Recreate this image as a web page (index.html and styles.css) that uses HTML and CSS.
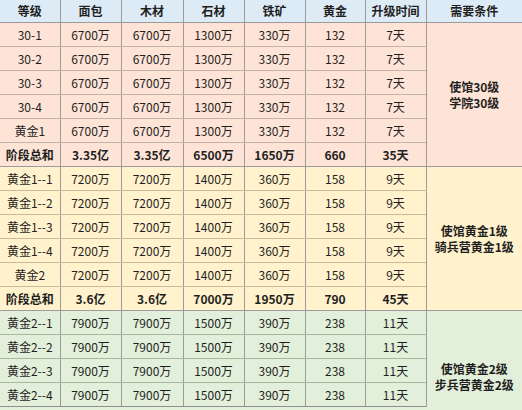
FILE: index.html
```html
<!DOCTYPE html>
<html lang="zh">
<head>
<meta charset="utf-8">
<link rel="stylesheet" href="styles.css">
</head>
<body>
<table class="sheet">
  <colgroup>
    <col class="c1"><col class="c2"><col class="c3"><col class="c4"><col class="c5"><col class="c6"><col class="c7"><col class="c8">
  </colgroup>
  <thead>
    <tr class="head"><th>等级</th><th>面包</th><th>木材</th><th>石材</th><th>铁矿</th><th>黄金</th><th>升级时间</th><th>需要条件</th></tr>
  </thead>
  <tbody class="s1">
    <tr><td>30-1</td><td>6700万</td><td>6700万</td><td>1300万</td><td>330万</td><td>132</td><td>7天</td><td class="cond" rowspan="6">使馆30级<br>学院30级</td></tr>
    <tr><td>30-2</td><td>6700万</td><td>6700万</td><td>1300万</td><td>330万</td><td>132</td><td>7天</td></tr>
    <tr><td>30-3</td><td>6700万</td><td>6700万</td><td>1300万</td><td>330万</td><td>132</td><td>7天</td></tr>
    <tr><td>30-4</td><td>6700万</td><td>6700万</td><td>1300万</td><td>330万</td><td>132</td><td>7天</td></tr>
    <tr><td>黄金1</td><td>6700万</td><td>6700万</td><td>1300万</td><td>330万</td><td>132</td><td>7天</td></tr>
    <tr class="total"><td>阶段总和</td><td>3.35亿</td><td>3.35亿</td><td>6500万</td><td>1650万</td><td>660</td><td>35天</td></tr>
  </tbody>
  <tbody class="s2">
    <tr><td>黄金1--1</td><td>7200万</td><td>7200万</td><td>1400万</td><td>360万</td><td>158</td><td>9天</td><td class="cond" rowspan="6">使馆黄金1级<br>骑兵营黄金1级</td></tr>
    <tr><td>黄金1--2</td><td>7200万</td><td>7200万</td><td>1400万</td><td>360万</td><td>158</td><td>9天</td></tr>
    <tr><td>黄金1--3</td><td>7200万</td><td>7200万</td><td>1400万</td><td>360万</td><td>158</td><td>9天</td></tr>
    <tr><td>黄金1--4</td><td>7200万</td><td>7200万</td><td>1400万</td><td>360万</td><td>158</td><td>9天</td></tr>
    <tr><td>黄金2</td><td>7200万</td><td>7200万</td><td>1400万</td><td>360万</td><td>158</td><td>9天</td></tr>
    <tr class="total"><td>阶段总和</td><td>3.6亿</td><td>3.6亿</td><td>7000万</td><td>1950万</td><td>790</td><td>45天</td></tr>
  </tbody>
  <tbody class="s3">
    <tr><td>黄金2--1</td><td>7900万</td><td>7900万</td><td>1500万</td><td>390万</td><td>238</td><td>11天</td><td class="cond cond-open" rowspan="4">使馆黄金2级<br>步兵营黄金2级</td></tr>
    <tr><td>黄金2--2</td><td>7900万</td><td>7900万</td><td>1500万</td><td>390万</td><td>238</td><td>11天</td></tr>
    <tr><td>黄金2--3</td><td>7900万</td><td>7900万</td><td>1500万</td><td>390万</td><td>238</td><td>11天</td></tr>
    <tr><td>黄金2--4</td><td>7900万</td><td>7900万</td><td>1500万</td><td>390万</td><td>238</td><td>11天</td></tr>
  </tbody>
</table>
</body>
</html>
```
FILE: styles.css
```css
html, body {
  margin: 0;
  padding: 0;
  overflow: hidden;
  background: #e2efda;
}
.sheet {
  border-collapse: collapse;
  table-layout: fixed;
  width: 522px;
  font-family: "Microsoft YaHei", "Noto Sans CJK SC", "Noto Sans", sans-serif;
  font-size: 12px;
  color: #1f1f1f;
}
.c1 { width: 60px; }
.c2 { width: 61px; }
.c3 { width: 62px; }
.c4 { width: 61px; }
.c5 { width: 61px; }
.c6 { width: 60px; }
.c7 { width: 61px; }
.c8 { width: 96px; }
.sheet th, .sheet td {
  padding: 0;
  text-align: center;
  vertical-align: middle;
  border-left: 1px solid #9b9b9b;
  border-right: 1px solid #9b9b9b;
  border-top: 1px solid #c3b4a8;
  border-bottom: 1px solid #c3b4a8;
  height: 23px;
  line-height: 16px;
  white-space: nowrap;
}
.sheet tr > :first-child { border-left: none; }
.sheet tr > :last-child { border-right: none; }
.head th {
  background: #ddebf7;
  font-weight: bold;
  height: 22px;
  border-top: none;
  border-bottom: 1px solid #9b9b9b;
}
.s1 td { background: #fde4d6; }
.s2 td { background: #fff2cc; border-top-color: #c9bb9a; border-bottom-color: #c9bb9a; }
.s3 td { background: #e2efda; border-top-color: #a9b7a0; border-bottom-color: #a9b7a0; }
.s3 tr:last-child td { border-bottom: 1px solid #8f8f8f; }
.total td { font-weight: bold; }
.s1 .total td, .s2 .total td { border-bottom: 1px solid #9b9b9b; }
.sheet td.cond {
  font-weight: bold;
  line-height: 16px;
  border-bottom: 1px solid #9b9b9b;
}
.sheet td.cond-open {
  vertical-align: bottom;
  padding-bottom: 14px;
  border-bottom: none;
}
```
